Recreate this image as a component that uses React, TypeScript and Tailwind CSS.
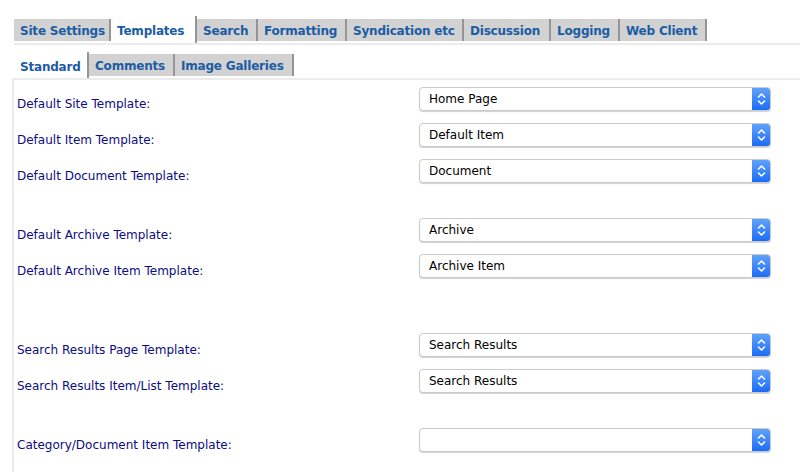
const topTabs = [
  { label: "Site Settings", w: "w-[97px]" },
  { label: "Templates", w: "w-[86px]", active: true },
  { label: "Search", w: "w-[61px]" },
  { label: "Formatting", w: "w-[89px]" },
  { label: "Syndication etc", w: "w-[117px]" },
  { label: "Discussion", w: "w-[87px]" },
  { label: "Logging", w: "w-[69px]" },
  { label: "Web Client", w: "w-[87px]" },
];

const subTabs = [
  { label: "Standard", w: "w-[75px]", active: true },
  { label: "Comments", w: "w-[86px]" },
  { label: "Image Galleries", w: "w-[119px]" },
];

type Row = { label: string; value: string; gap?: string };

const rows: Row[] = [
  { label: "Default Site Template:", value: "Home Page" },
  { label: "Default Item Template:", value: "Default Item" },
  { label: "Default Document Template:", value: "Document" },
  { label: "Default Archive Template:", value: "Archive", gap: "mt-[23px]" },
  { label: "Default Archive Item Template:", value: "Archive Item" },
  { label: "Search Results Page Template:", value: "Search Results", gap: "mt-[43px]" },
  { label: "Search Results Item/List Template:", value: "Search Results" },
  { label: "Category/Document Item Template:", value: "", gap: "mt-[23px]" },
];

function Tab({ label, w, active, small }: { label: string; w: string; active?: boolean; small?: boolean }) {
  return (
    <div
      className={`${w} shrink-0 border-r-2 border-[#959595] pl-[6px] flex items-center text-[12px] tracking-[-0.2px] font-bold text-[#1b5ca4] whitespace-nowrap ${
        active
          ? small
            ? "h-[26px] pt-[4px] bg-white"
            : "h-[27px] pt-[3px] bg-white"
          : small
          ? "h-[22px] mt-[2px] pt-[2px] bg-[#d2d2d2]"
          : "h-[22px] mt-[3px] pt-[2px] bg-[#d2d2d2]"
      }`}
    >
      {label}
    </div>
  );
}

function Select({ value }: { value: string }) {
  return (
    <div className="w-[352px] h-[24px] shrink-0 flex rounded-[4px] border border-[#cacaca] shadow-[0_1px_1px_rgba(0,0,0,0.18)] bg-white overflow-hidden">
      <div className="flex-1 pl-[9px] flex items-center text-[12px] text-black">{value}</div>
      <div className="w-[19px] -my-px -mr-px bg-linear-to-b from-[#62a4fb] to-[#1768f5] flex items-center justify-center">
        <svg width="9" height="14" viewBox="0 0 9 14" fill="none" stroke="white" strokeWidth="1.6" strokeLinecap="round" strokeLinejoin="round">
          <polyline points="1.5 5 4.5 2 7.5 5" />
          <polyline points="1.5 9 4.5 12 7.5 9" />
        </svg>
      </div>
    </div>
  );
}

export default function App() {
  return (
    <div className="w-[800px] h-[472px] overflow-hidden bg-white font-['DejaVu_Sans',sans-serif]">
      <div className="pt-[16px] pl-[14px]">
        <div className="flex items-start h-[27px]">
          {topTabs.map((t) => (
            <Tab key={t.label} {...t} />
          ))}
        </div>
        <div className="h-[2px] bg-[#ececec]" />
      </div>

      <div className="pl-[14px] pt-[7px]">
        <div className="flex items-start h-[26px]">
          {subTabs.map((t) => (
            <Tab key={t.label} {...t} small />
          ))}
        </div>
      </div>

      <div className="ml-[12px] border-l-2 border-t-2 border-[#ececec] pt-[1px] h-[400px]">
        {rows.map((r) => (
          <div key={r.label} className={`flex items-center h-[36px] ${r.gap ?? ""}`}>
            <div className="w-[405px] pl-[3px] pt-[9px] text-[12px] text-[#0c0c82] whitespace-nowrap">{r.label}</div>
            <Select value={r.value} />
          </div>
        ))}
      </div>
    </div>
  );
}
